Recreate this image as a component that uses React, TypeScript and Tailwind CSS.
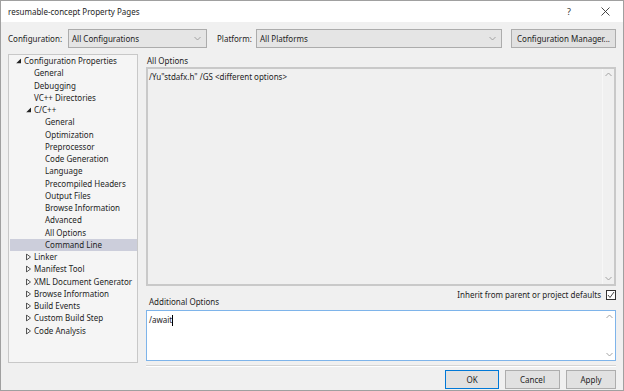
import React from "react";

const font = { fontFamily: '"Segoe UI", "Noto Sans", "Open Sans", sans-serif' };

function Chevron({ up = false }: { up?: boolean }) {
  return (
    <svg width="7" height="5" viewBox="0 0 7 5" className="block">
      <path
        d={up ? "M0.5 4 L3.5 1 L6.5 4" : "M0.5 1 L3.5 4 L6.5 1"}
        fill="none"
        stroke="#9a9a9a"
        strokeWidth="0.9"
      />
    </svg>
  );
}

function OpenTri() {
  return (
    <svg width="5" height="5" viewBox="0 0 5 5" className="block">
      <path d="M5 0 L5 5 L0 5 Z" fill="#222" />
    </svg>
  );
}

function ClosedTri() {
  return (
    <svg width="5" height="7" viewBox="0 0 5 7" className="block">
      <path d="M0.5 0.5 L4.5 3.5 L0.5 6.5 Z" fill="none" stroke="#444" strokeWidth="0.9" />
    </svg>
  );
}

type Item = { label: string; level: number; tri?: "open" | "closed"; selected?: boolean };

const items: Item[] = [
  { label: "Configuration Properties", level: 0, tri: "open" },
  { label: "General", level: 1 },
  { label: "Debugging", level: 1 },
  { label: "VC++ Directories", level: 1 },
  { label: "C/C++", level: 1, tri: "open" },
  { label: "General", level: 2 },
  { label: "Optimization", level: 2 },
  { label: "Preprocessor", level: 2 },
  { label: "Code Generation", level: 2 },
  { label: "Language", level: 2 },
  { label: "Precompiled Headers", level: 2 },
  { label: "Output Files", level: 2 },
  { label: "Browse Information", level: 2 },
  { label: "Advanced", level: 2 },
  { label: "All Options", level: 2 },
  { label: "Command Line", level: 2, selected: true },
  { label: "Linker", level: 1, tri: "closed" },
  { label: "Manifest Tool", level: 1, tri: "closed" },
  { label: "XML Document Generator", level: 1, tri: "closed" },
  { label: "Browse Information", level: 1, tri: "closed" },
  { label: "Build Events", level: 1, tri: "closed" },
  { label: "Custom Build Step", level: 1, tri: "closed" },
  { label: "Code Analysis", level: 1, tri: "closed" },
];

const textPad: Record<number, string> = { 0: "pl-[14px]", 1: "pl-[24px]", 2: "pl-[35px]" };

function TreeRow({ item }: { item: Item }) {
  return (
    <div
      className={
        "relative h-[12.25px] flex items-center whitespace-nowrap " +
        textPad[item.level] +
        (item.selected ? " bg-[#cccedb]" : "")
      }
    >
      {item.tri && (
        <span
          className={
            "absolute top-1/2 -translate-y-1/2 " +
            (item.level === 0 ? "left-[6px]" : "left-[16px]")
          }
        >
          {item.tri === "open" ? <OpenTri /> : <ClosedTri />}
        </span>
      )}
      <span>{item.label}</span>
    </div>
  );
}

function Dropdown({ label, className }: { label: string; className: string }) {
  return (
    <div
      className={
        "h-[19px] bg-[#e5e5e5] border border-[#acacac] flex items-center justify-between pl-[3px] pr-[5px] " +
        className
      }
    >
      <span>{label}</span>
      <Chevron />
    </div>
  );
}

function Btn({ label, primary = false, className = "" }: { label: string; primary?: boolean; className?: string }) {
  return (
    <div
      className={
        "h-[19px] bg-[#e1e1e1] border flex items-center justify-center whitespace-nowrap " +
        (primary ? "border-[#0078d7]" : "border-[#adadad]") +
        " " +
        className
      }
    >
      {label}
    </div>
  );
}

export default function App() {
  return (
    <div
      className="w-[624px] h-[391px] bg-[#f0f0f0] border border-[#a0a0a0] flex flex-col text-[8px] text-[#1e1e1e] overflow-hidden"
      style={font}
    >
      {/* Title bar */}
      <div className="h-[21px] bg-white flex items-center pl-[7px] shrink-0">
        <span className="flex-1">resumable-concept Property Pages</span>
        <span className="w-[36px] text-center text-[9px] text-[#333]">?</span>
        <span className="w-[36px] flex justify-center">
          <svg width="9" height="9" viewBox="0 0 9 9">
            <path d="M0.5 0.5 L8.5 8.5 M8.5 0.5 L0.5 8.5" stroke="#333" strokeWidth="0.9" />
          </svg>
        </span>
      </div>

      {/* Body */}
      <div className="flex-1 flex flex-col px-[7px] pt-[7px]">
        {/* Configuration row */}
        <div className="flex items-center h-[19px]">
          <span className="w-[60px]">Configuration:</span>
          <Dropdown label="All Configurations" className="w-[139px]" />
          <span className="ml-[10px] w-[39px]">Platform:</span>
          <Dropdown label="All Platforms" className="w-[246px]" />
          <Btn label="Configuration Manager..." className="ml-[9px] w-[105px]" />
        </div>

        {/* Main */}
        <div className="flex mt-[6px] h-[309px]">
          {/* Tree */}
          <div className="w-[130px] h-[309px] bg-[#f5f5f5] border border-[#c8c8c8] pl-[1px]">
            {items.map((it, i) => (
              <TreeRow key={i} item={it} />
            ))}
          </div>

          {/* Right panel */}
          <div className="flex-1 ml-[8px] flex flex-col">
            <div className="h-[13px] pl-[1px] flex items-center">All Options</div>
            <div className="h-[219px] border-2 border-[#c9c9c9] bg-[#f0f0f0] flex">
              <div className="flex-1 pl-[1px] pt-[2px] leading-[12px]">/Yu"stdafx.h" /GS &lt;different options&gt;</div>
              <div className="w-[12px] flex flex-col items-center justify-between py-[3px] border-l border-[#f7f7f7]">
                <Chevron up />
                <Chevron />
              </div>
            </div>
            <div className="h-[24px] flex">
              <div className="flex-1 flex items-end pl-[3px] pb-[2px]">Additional Options</div>
              <div className="flex items-center gap-[5px] pb-[6px]">
                <span>Inherit from parent or project defaults</span>
                <span className="w-[10px] h-[10px] border border-[#333] bg-white flex items-center justify-center">
                  <svg width="8" height="8" viewBox="0 0 8 8">
                    <path d="M1 4 L3 6.5 L7 1" fill="none" stroke="#333" strokeWidth="0.9" />
                  </svg>
                </span>
              </div>
            </div>
            <div className="h-[51px] border border-[#7eb4ea] bg-white flex">
              <div className="flex-1 pl-[2px] pt-[3px] leading-[12px] flex items-start">
                <span>/await</span>
                <span className="w-[1px] h-[11px] bg-black mt-[1px]" />
              </div>
              <div className="w-[12px] flex flex-col items-center justify-between py-[3px]">
                <Chevron up />
                <Chevron />
              </div>
            </div>
          </div>
        </div>

        {/* Separator */}
        <div className="ml-[138px] mt-[2px] h-[2px] border-t border-[#d5d5d5] border-b border-b-white" />

        {/* Buttons */}
        <div className="flex justify-end gap-[6px] mt-[3px]">
          <Btn label="OK" primary className="w-[54px]" />
          <Btn label="Cancel" className="w-[55px]" />
          <Btn label="Apply" className="w-[50px]" />
        </div>
      </div>
    </div>
  );
}
